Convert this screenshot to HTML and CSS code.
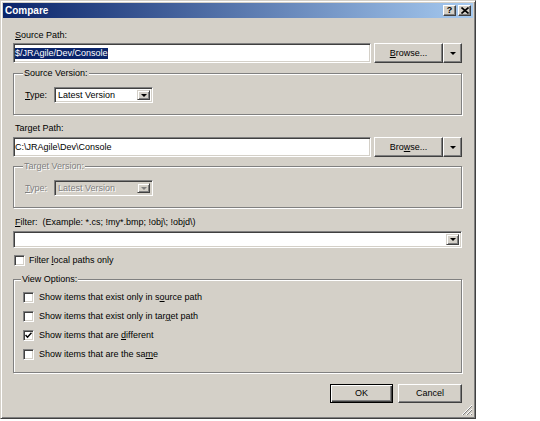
FILE: index.html
```html
<!DOCTYPE html>
<html>
<head>
  <meta charset="utf-8">
  <title>Compare</title>
  <link rel="stylesheet" href="styles.css">
</head>

<body>
  <div class="dialog">
    <div class="titlebar">
      <span class="title">Compare</span>
      <span class="cap-btn help">?</span>
      <span class="cap-btn close">
        <svg width="8" height="7" viewBox="0 0 8 7"><path d="M0.5 0.5 L7.5 6.5 M7.5 0.5 L0.5 6.5" stroke="#000" stroke-width="1.6"/></svg>
      </span>
    </div>

    <div class="content">
      <div class="lbl lbl-first"><u>S</u>ource Path:</div>
      <div class="path-row">
        <div class="field"><span class="sel">$/JRAgile/Dev/Console</span></div>
        <div class="split">
          <span class="btn main"><u>B</u>rowse...</span>
          <span class="btn drop"><i class="tri"></i></span>
        </div>
      </div>

      <fieldset class="group ver">
        <legend>Source Version:</legend>
        <div class="type-row">
          <span class="type-lbl"><u>T</u>ype:</span>
          <div class="combo">
            <span class="combo-text">Latest Version</span>
            <span class="combo-btn"><i class="tri"></i></span>
          </div>
        </div>
      </fieldset>

      <div class="lbl lbl-target">Target Path:</div>
      <div class="path-row path-target">
        <div class="field"><span class="val">C:\JRAgile\Dev\Console</span></div>
        <div class="split">
          <span class="btn main">Bro<u>w</u>se...</span>
          <span class="btn drop"><i class="tri"></i></span>
        </div>
      </div>

      <fieldset class="group ver disabled">
        <legend>Target Version:</legend>
        <div class="type-row">
          <span class="type-lbl"><u>T</u>ype:</span>
          <div class="combo">
            <span class="combo-text">Latest Version</span>
            <span class="combo-btn"><i class="tri"></i></span>
          </div>
        </div>
      </fieldset>

      <div class="lbl lbl-filter"><u>F</u>ilter:  (Example: *.cs; !my*.bmp; !obj\; !objd\)</div>
      <div class="combo wide">
        <span class="combo-text"></span>
        <span class="combo-btn"><i class="tri"></i></span>
      </div>

      <div class="check-row local">
        <span class="cb"></span>
        <span>Filter <u>l</u>ocal paths only</span>
      </div>

      <fieldset class="group view">
        <legend>View Options:</legend>
        <div class="check-row">
          <span class="cb"></span>
          <span>Show items that exist only in s<u>o</u>urce path</span>
        </div>
        <div class="check-row">
          <span class="cb"></span>
          <span>Show items that exist only in tar<u>g</u>et path</span>
        </div>
        <div class="check-row">
          <span class="cb checked">
            <svg width="7" height="7" viewBox="0 0 7 7"><path d="M0.5 3 L2.5 5.2 L6.5 0.8" fill="none" stroke="#000" stroke-width="1.5"/></svg>
          </span>
          <span>Show items that are <u>d</u>ifferent</span>
        </div>
        <div class="check-row">
          <span class="cb"></span>
          <span>Show items that are the sa<u>m</u>e</span>
        </div>
      </fieldset>

      <div class="actions">
        <span class="btn default">OK</span>
        <span class="btn">Cancel</span>
      </div>
    </div>

    <svg class="grip" width="11" height="11" viewBox="0 0 11 11">
      <path d="M10 1 L1 10 M10 5 L5 10 M10 9 L9 10" stroke="#808080" stroke-width="1"/>
      <path d="M10 0 L0 10 M10 4 L4 10 M10 8 L8 10" stroke="#fff" stroke-width="1"/>
    </svg>
  </div>
</body>

</html>
```

FILE: styles.css
```css
body {
  margin: 0;
  background: #fff;
  font-family: "Liberation Sans", Arial, sans-serif;
  font-size: 9px;
  line-height: 11px;
  color: #000;
}

.dialog {
  position: relative;
  width: 476px;
  height: 419px;
  box-sizing: border-box;
  background: #d4d0c8;
  border: 1px solid;
  border-color: #d4d0c8 #404040 #404040 #d4d0c8;
  box-shadow: inset 1px 1px #fff, inset -1px -1px #808080;
  padding: 2px;
  display: flex;
  flex-direction: column;
}

/* caption */
.titlebar {
  height: 15px;
  display: flex;
  align-items: center;
  padding: 0 2px;
  background: linear-gradient(to right, #0a246a, #a6caf0);
  color: #fff;
}

.title {
  font-size: 10px;
  font-weight: bold;
}

.cap-btn {
  width: 11px;
  height: 9px;
  display: flex;
  align-items: center;
  justify-content: center;
  background: #d4d0c8;
  color: #000;
  border: 1px solid;
  border-color: #fff #404040 #404040 #fff;
  box-shadow: inset -1px -1px #808080;
  font-weight: bold;
  font-size: 9px;
}

.help {
  margin-left: auto;
  margin-right: 2px;
}

.content {
  flex: 1;
  display: flex;
  flex-direction: column;
  padding: 0 11px 0 10px;
}

.lbl {
  white-space: pre;
  padding-left: 2px;
}

.lbl-first { margin-top: 12px; }
.lbl-target { margin-top: 8px; }
.lbl-filter { margin-top: 9px; }

/* path + browse */
.path-row {
  display: flex;
  gap: 3px;
  height: 20px;
  margin-top: 2px;
}

.path-target { margin-top: 3px; }

.field, .combo {
  box-sizing: border-box;
  background: #fff;
  border: 1px solid;
  border-color: #808080 #fff #fff #808080;
  box-shadow: inset 1px 1px #404040, inset -1px -1px #d4d0c8;
  display: flex;
  align-items: center;
}

.field {
  flex: 1;
  padding: 0 1px;
}

.sel {
  background: #0a246a;
  color: #fff;
}

.split {
  display: flex;
  width: 88px;
}

.btn {
  box-sizing: border-box;
  display: flex;
  align-items: center;
  justify-content: center;
  background: #d4d0c8;
  border: 1px solid;
  border-color: #fff #404040 #404040 #fff;
  box-shadow: inset -1px -1px #808080;
}

.split .main { flex: 1; }
.split .drop { width: 19px; }

.tri {
  width: 0;
  height: 0;
  border-left: 3px solid transparent;
  border-right: 3px solid transparent;
  border-top: 3px solid #000;
}

/* group boxes */
.group {
  margin: 0;
  min-inline-size: 0;
  border: 1px solid #808080;
  box-shadow: 1px 1px #fff, inset 1px 1px #fff;
}

.group legend {
  padding: 0 1px;
  margin-left: -2px;
  background: #d4d0c8;
}

.ver {
  padding: 8px 10px 11px 11px;
  margin-top: 5px;
}

.ver.disabled { margin-top: 4px; }

.type-row {
  display: flex;
  align-items: center;
  height: 16px;
}

.type-lbl {
  width: 29px;
}

.combo {
  width: 99px;
  height: 16px;
  padding: 2px;
}

.combo-text {
  flex: 1;
  padding-left: 1px;
}

.combo-btn {
  width: 13px;
  align-self: stretch;
  box-sizing: border-box;
  display: flex;
  align-items: center;
  justify-content: center;
  background: #d4d0c8;
  border: 1px solid;
  border-color: #d4d0c8 #404040 #404040 #d4d0c8;
  box-shadow: inset 1px 1px #fff, inset -1px -1px #808080;
}

.disabled,
.disabled legend {
  color: #808080;
  text-shadow: 1px 1px #fff;
}

.disabled .combo {
  background: #d4d0c8;
}

.disabled .tri {
  border-top-color: #808080;
}

.combo.wide {
  width: auto;
  height: 17px;
  margin-top: 3px;
}

/* check boxes */
.check-row {
  display: flex;
  align-items: center;
  gap: 5px;
  height: 11px;
}

.check-row.local {
  margin-top: 7px;
  gap: 4px;
  padding-left: 1px;
}

.cb {
  width: 11px;
  height: 11px;
  box-sizing: border-box;
  display: flex;
  align-items: center;
  justify-content: center;
  background: #fff;
  border: 1px solid;
  border-color: #808080 #fff #fff #808080;
  box-shadow: inset 1px 1px #404040, inset -1px -1px #d4d0c8;
}

.view {
  margin-top: 8px;
  padding: 7px 10px 12px 9px;
  display: flex;
  flex-direction: column;
  gap: 8px;
}

/* OK / Cancel */
.actions {
  display: flex;
  justify-content: flex-end;
  gap: 5px;
  margin-top: 11px;
}

.actions .btn {
  width: 64px;
  height: 19px;
}

.actions .default {
  width: 63px;
  border: 1px solid #000;
  box-shadow: inset 1px 1px #fff, inset -1px -1px #404040, inset -2px -2px #808080;
}

.grip {
  position: absolute;
  right: 2px;
  bottom: 2px;
}
```
